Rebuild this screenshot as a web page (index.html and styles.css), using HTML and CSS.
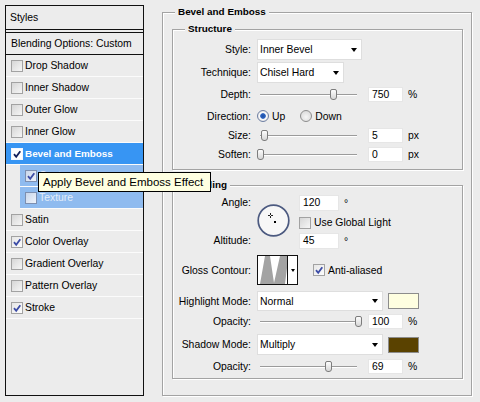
FILE: index.html
```html
<!DOCTYPE html>
<html>
<head>
<meta charset="utf-8">
<link rel="stylesheet" href="styles.css">
</head>
<body>
<div class="dialog">
  <div class="styles-panel">
    <div class="sp-head">Styles</div>
    <div class="sp-blend">Blending Options: Custom</div>
    <div class="sp-row"><span class="cb"></span>Drop Shadow</div>
    <div class="sp-row"><span class="cb"></span>Inner Shadow</div>
    <div class="sp-row"><span class="cb"></span>Outer Glow</div>
    <div class="sp-row"><span class="cb"></span>Inner Glow</div>
    <div class="sp-row sel"><span class="cb on"><svg viewBox="0 0 10 10"><path d="M2 5.2L4.2 7.8L8.3 2.2"/></svg></span>Bevel and Emboss</div>
    <div class="sp-row sub"><span class="cb on"><svg viewBox="0 0 10 10"><path d="M2 5.2L4.2 7.8L8.3 2.2"/></svg></span>Contour</div>
    <div class="sp-row sub"><span class="cb"></span>Texture</div>
    <div class="sp-row"><span class="cb"></span>Satin</div>
    <div class="sp-row"><span class="cb on"><svg viewBox="0 0 10 10"><path d="M2 5.2L4.2 7.8L8.3 2.2"/></svg></span>Color Overlay</div>
    <div class="sp-row"><span class="cb"></span>Gradient Overlay</div>
    <div class="sp-row"><span class="cb"></span>Pattern Overlay</div>
    <div class="sp-row"><span class="cb on"><svg viewBox="0 0 10 10"><path d="M2 5.2L4.2 7.8L8.3 2.2"/></svg></span>Stroke</div>
  </div>

  <div class="group outer">
    <div class="gtitle gt-outer">Bevel and Emboss</div>

    <div class="group structure">
      <div class="gtitle gt-inner">Structure</div>
      <div class="row r-style">
        <span class="lbl">Style:</span>
        <div class="select w-style"><span>Inner Bevel</span><span class="arrow"></span></div>
      </div>
      <div class="row r-tech">
        <span class="lbl">Technique:</span>
        <div class="select w-tech"><span>Chisel Hard</span><span class="arrow"></span></div>
      </div>
      <div class="row r-depth">
        <span class="lbl">Depth:</span>
        <div class="slider"><span class="thumb" style="left:73px"></span></div>
        <span class="num">750</span><span class="unit">%</span>
      </div>
      <div class="row r-dir">
        <span class="lbl">Direction:</span>
        <span class="radio on"></span><span class="rlbl">Up</span>
        <span class="radio r2"></span><span class="rlbl">Down</span>
      </div>
      <div class="row r-size">
        <span class="lbl">Size:</span>
        <div class="slider"><span class="thumb" style="left:4px"></span></div>
        <span class="num">5</span><span class="unit">px</span>
      </div>
      <div class="row r-soften">
        <span class="lbl">Soften:</span>
        <div class="slider"><span class="thumb" style="left:0px"></span></div>
        <span class="num">0</span><span class="unit">px</span>
      </div>
    </div>

    <div class="group shading">
      <div class="gtitle gt-inner">Shading</div>
      <div class="angle">
        <div class="lblcol"><span>Angle:</span><span>Altitude:</span></div>
        <svg class="dial" width="33" height="33" viewBox="0 0 33 33">
          <circle cx="16.5" cy="16.5" r="15.3" fill="#f7f7f7" stroke="#4c5a80" stroke-width="1.7"/>
          <rect x="13" y="9" width="1" height="2" fill="#222"/>
          <rect x="13" y="12" width="1" height="2" fill="#222"/>
          <rect x="11" y="11" width="2" height="1" fill="#222"/>
          <rect x="14" y="11" width="2" height="1" fill="#222"/>
          <rect x="17" y="17" width="2" height="2" fill="#000"/>
        </svg>
        <div class="acol">
          <div class="arow"><span class="num wide">120</span><span class="deg">°</span></div>
          <div class="arow chkrow"><span class="cb"></span><span class="cbl">Use Global Light</span></div>
          <div class="arow alt"><span class="num wide">45</span><span class="deg">°</span></div>
        </div>
      </div>
      <div class="row r-gloss">
        <span class="lbl">Gloss Contour:</span>
        <div class="contour">
          <svg class="cgraph" width="29" height="28" viewBox="0 0 29 28"><polygon points="2,28 7,0 12,0 16,27 22,0 29,0 29,12 27,28" fill="#a3a3a3"/></svg>
          <span class="cdrop"><span class="arrow small"></span></span>
        </div>
        <span class="cb on aa"><svg viewBox="0 0 10 10"><path d="M2 5.2L4.2 7.8L8.3 2.2"/></svg></span><span class="cbl">Anti-aliased</span>
      </div>
      <div class="row r-hmode">
        <span class="lbl">Highlight Mode:</span>
        <div class="select w-mode"><span>Normal</span><span class="arrow"></span></div>
        <span class="swatch light"></span>
      </div>
      <div class="row r-op1">
        <span class="lbl">Opacity:</span>
        <div class="slider"><span class="thumb" style="left:98px"></span></div>
        <span class="num">100</span><span class="unit">%</span>
      </div>
      <div class="row r-smode">
        <span class="lbl">Shadow Mode:</span>
        <div class="select w-mode"><span>Multiply</span><span class="arrow"></span></div>
        <span class="swatch dark"></span>
      </div>
      <div class="row r-op2">
        <span class="lbl">Opacity:</span>
        <div class="slider"><span class="thumb" style="left:68px"></span></div>
        <span class="num">69</span><span class="unit">%</span>
      </div>
    </div>
  </div>
</div>
<div class="tooltip">Apply Bevel and Emboss Effect</div>
</body>
</html>
```

FILE: styles.css
```css
* { box-sizing: border-box; }
html, body { margin: 0; padding: 0; }
body {
  width: 480px;
  height: 402px;
  overflow: hidden;
  position: relative;
  background: #ececec;
  font-family: "Liberation Sans", Arial, sans-serif;
  font-size: 10.4px;
  color: #000;
}
.dialog { display: flex; align-items: flex-start; padding: 5px 0 0 5px; }

/* left styles list */
.styles-panel { width: 139px; height: 391px; border: 1px solid #111; flex: none; }
.sp-head { height: 24px; line-height: 23px; padding-left: 4px; border-bottom: 1px solid #111; margin-bottom: 2px; }
.sp-blend { height: 23px; line-height: 21px; padding-left: 5px; border-top: 1px solid #111; border-bottom: 1px solid #111; }
.sp-row {
  height: 22px;
  display: flex;
  align-items: center;
  gap: 2px;
  padding-left: 5px;
  border-bottom: 1px solid #fbfbfb;
  white-space: nowrap;
}
.sp-row.sel { background: #3795f3; color: #fff; font-weight: bold; font-size: 9.9px; }
.sp-row.sub { margin-left: 14px; background: #8fbbef; color: #e3edfa; }

.cb {
  width: 12px; height: 12px; flex: none;
  border: 1px solid #a2a2a2;
  background: linear-gradient(135deg, #d6d6d6, #f6f6f6);
  display: flex; align-items: center; justify-content: center;
}
.cb.on { background: linear-gradient(135deg, #e6e6e6, #fdfdfd); }
.cb svg { width: 10px; height: 10px; }
.cb path { fill: none; stroke: #3c4ca6; stroke-width: 1.8; }
.sel .cb { background: #fff; border-color: #f4f8ff; }
.sel .cb path { stroke: #14205c; }
.sub .cb { border-color: #7d8fb0; background: linear-gradient(135deg, #c9d6ea, #eef3fb); }

/* group boxes */
.group {
  border: 1px solid #a3a3a3;
  box-shadow: 1px 1px 0 #fff, inset 1px 1px 0 #fff;
}
.outer { width: 310px; height: 384px; margin: 7px 0 0 18px; padding: 0 8px 0 9px; flex: none; }
.gtitle {
  display: block;
  width: max-content;
  height: 12px;
  line-height: 12px;
  margin-top: -7px;
  padding: 0 3px;
  background: #ececec;
  font-weight: bold;
  font-size: 9.9px;
}
.gt-outer { margin-left: 3px; }
.gt-inner { margin-left: 12px; }
.structure { margin-top: 11px; padding-bottom: 5px; }
.shading { margin-top: 15px; padding-bottom: 3px; }

.row { display: flex; align-items: center; white-space: nowrap; }
.lbl { width: 78px; margin-right: 6px; text-align: right; flex: none; }

.r-style { margin-top: 4px; height: 21px; }
.r-tech { margin-top: 2px; height: 21px; }
.r-depth { margin-top: 2px; height: 19px; }
.r-dir { margin-top: 2px; height: 20px; }
.r-size { height: 18px; }
.r-soften { margin-top: 1px; height: 19px; }

.select {
  height: 21px;
  background: #fff;
  border: 1px solid #dedede;
  display: flex;
  align-items: center;
  justify-content: space-between;
  padding: 0 4px 0 2px;
  flex: none;
}
.w-style { width: 105px; }
.w-tech { width: 87px; }
.w-mode { width: 126px; height: 20px; }
.r-smode .w-mode { height: 21px; }
.arrow {
  width: 0; height: 0;
  border-left: 3.5px solid transparent;
  border-right: 3.5px solid transparent;
  border-top: 4px solid #000;
}
.arrow.small { border-left-width: 2.5px; border-right-width: 2.5px; border-top-width: 3px; }

.slider { position: relative; width: 105px; height: 11px; flex: none; }
.slider::before {
  content: "";
  position: absolute;
  left: 3px; right: 5px; top: 5px;
  height: 1px;
  background: #9b9b9b;
  box-shadow: 0 1px 0 #fff;
}
.thumb {
  position: absolute;
  top: 0;
  width: 7px; height: 11px;
  border: 1px solid #7c7c7c;
  border-radius: 2px 2px 3px 3px;
  background: linear-gradient(#fdfdfd, #d6d6d6);
}
.num {
  width: 35px; height: 15px;
  margin-left: 6px;
  padding-left: 3px;
  line-height: 13px;
  background: #fff;
  border: 1px solid #e6e6e6;
  flex: none;
}
.num.wide { width: 40px; height: 16px; line-height: 14px; margin-left: 0; }
.unit { margin-left: 5px; }

.radio {
  width: 12px; height: 12px; flex: none;
  border-radius: 50%;
  border: 1px solid #8d8d8d;
  background: radial-gradient(circle at 50% 60%, #f6f6f6, #d4d4d4);
}
.radio.on {
  border-color: #6e7fa3;
  background: radial-gradient(circle at 50% 50%, #1d4fa6 0, #2d63bf 2.4px, #fff 3.2px, #e6e6e6 5px);
}
.radio.r2 { margin-left: 15px; }
.rlbl { margin-left: 3px; }

/* shading */
.angle { display: flex; margin-top: 4px; }
.lblcol {
  width: 78px; margin-right: 6px; height: 54px; flex: none;
  display: flex; flex-direction: column; justify-content: space-between;
  text-align: right; line-height: 16px;
}
.dial { margin-top: 9px; flex: none; display: block; }
.acol { margin-left: 9px; display: flex; flex-direction: column; }
.arow { display: flex; align-items: center; }
.chkrow { margin-top: 5px; height: 13px; }
.alt { margin-top: 4px; }
.deg { margin-left: 5px; }
.cbl { margin-left: 3px; }

.r-gloss { margin-top: 6px; height: 30px; }
.contour {
  width: 41px; height: 30px;
  border: 1px solid #111;
  background: #fff;
  display: flex;
  flex: none;
}
.cgraph { display: block; flex: none; }
.cdrop {
  flex: 1;
  border-left: 1px solid #111;
  display: flex; align-items: center; justify-content: center;
}
.cb.aa { margin-left: 15px; }

.r-hmode { margin-top: 6px; height: 20px; }
.r-op1 { margin-top: 2px; height: 17px; }
.r-smode { margin-top: 4px; height: 21px; }
.r-op2 { margin-top: 2px; height: 18px; }
.swatch { width: 31px; height: 16px; margin-left: 5px; border: 1px solid #8c8c8c; flex: none; }
.swatch.light { background: #fefee0; }
.swatch.dark { background: #5a4200; }

.tooltip {
  position: absolute;
  left: 38px; top: 172px;
  width: 173px; height: 20px;
  border: 1px solid #000;
  background: #ffffe1;
  font-size: 11.5px;
  line-height: 18px;
  padding-left: 4px;
  white-space: nowrap;
}
```
